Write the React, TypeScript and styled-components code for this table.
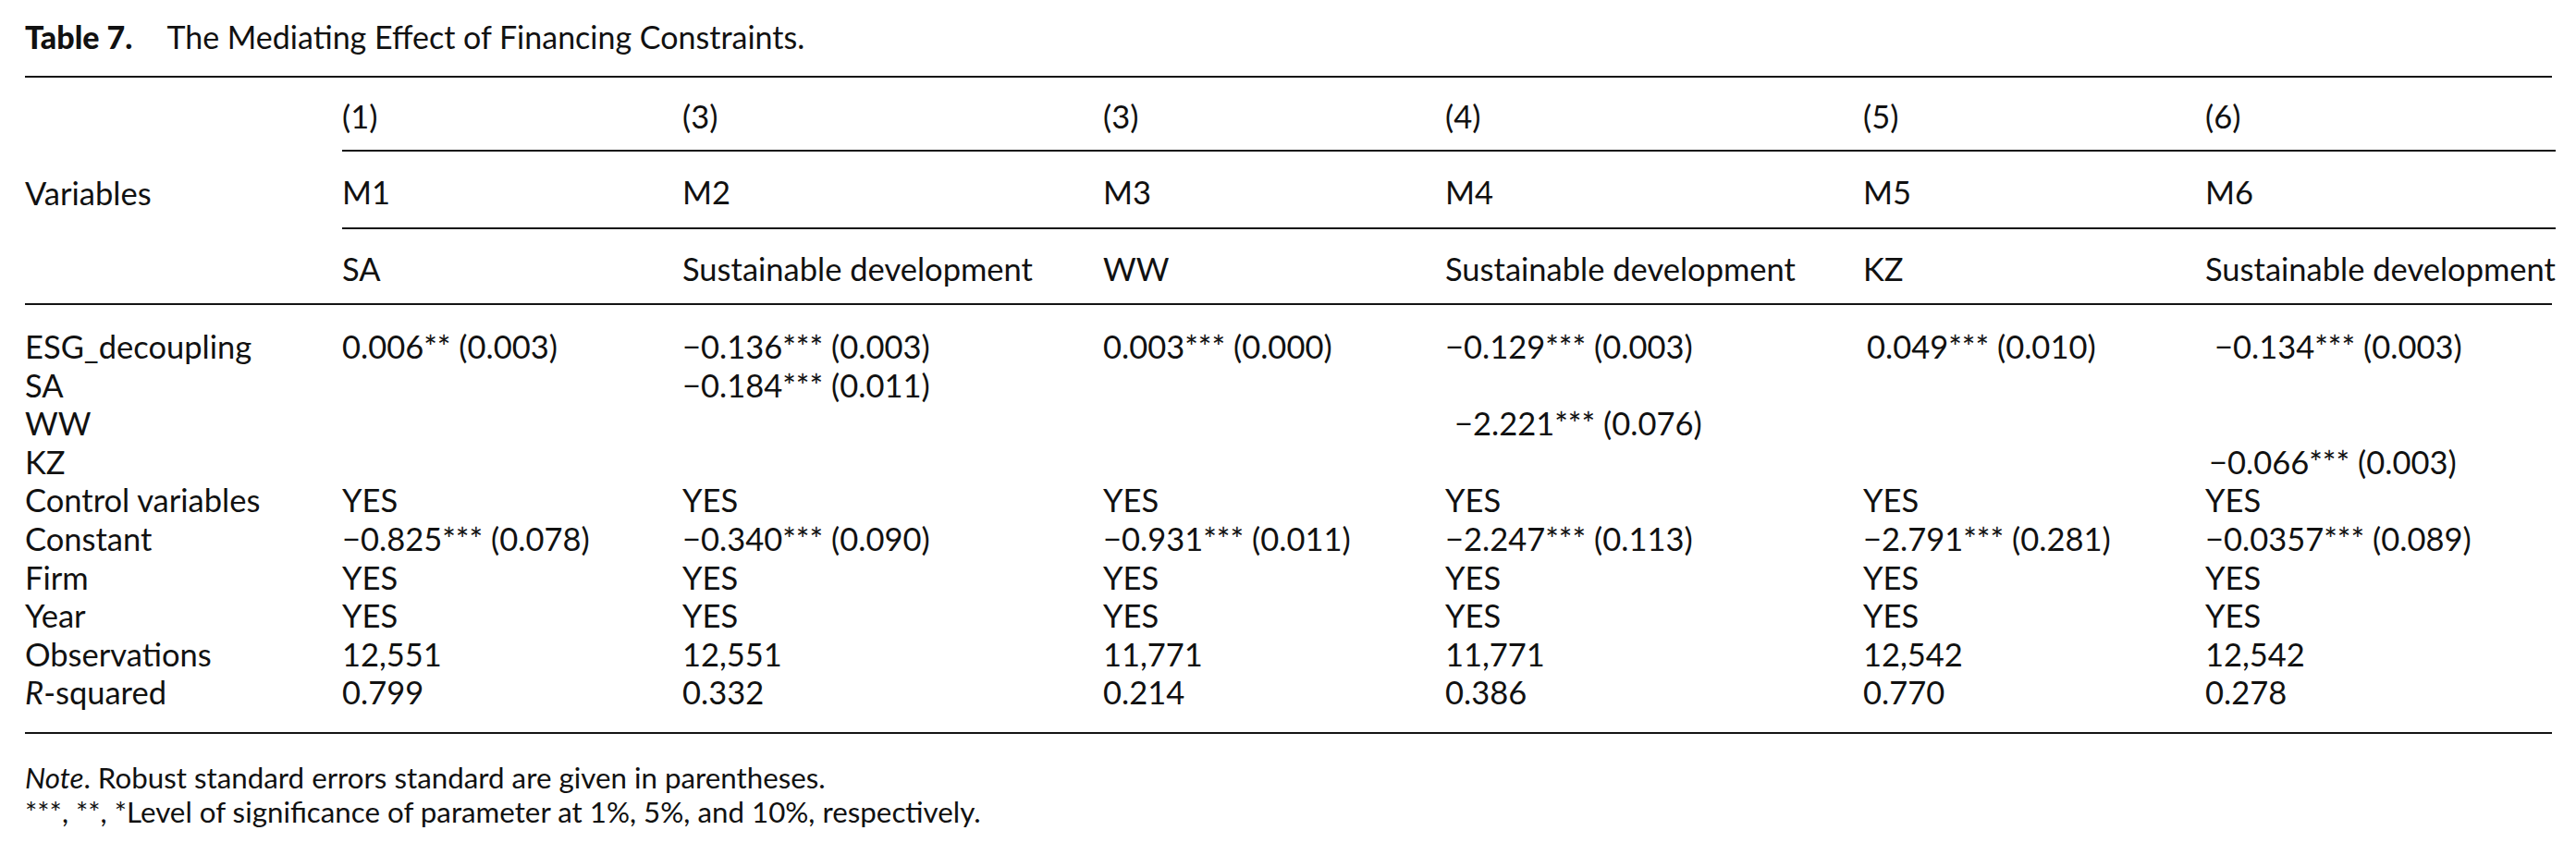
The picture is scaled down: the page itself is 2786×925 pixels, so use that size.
import styled, { createGlobalStyle } from "styled-components";

const COLS = "343px 368px 455px 370px 452px 370px 1fr";
const INK = "#141414";

const GlobalStyle = createGlobalStyle`
  html, body {
    margin: 0;
    padding: 0;
    background: #fff;
  }
  body {
    font-family: "Lato", "Liberation Sans", sans-serif;
    color: #111;
  }
`;

const Page = styled.div`
  width: 2786px;
  height: 925px;
  box-sizing: border-box;
  padding: 20px 26px 0 27px;
  background: #fff;
`;

const Caption = styled.div`
  display: flex;
  gap: 37px;
  font-size: 34px;
  line-height: 40px;
`;

const CaptionLabel = styled.span`
  font-weight: 900;
`;

const Table = styled.div`
  margin-top: 22px;
  border-top: 2px solid ${INK};
  border-bottom: 2px solid ${INK};
  font-size: 34.5px;
`;

const Head = styled.div`
  display: grid;
  grid-template-columns: ${COLS};
  grid-template-rows: 80px 84px 80px;
  border-bottom: 2px solid ${INK};
`;

const VariablesCell = styled.div`
  grid-row: 1 / span 3;
  display: flex;
  align-items: center;
  padding-top: 4px;
`;

const HeadCell = styled.div<{ $ruled?: boolean }>`
  display: flex;
  align-items: center;
  padding-top: 4px;
  white-space: nowrap;
  box-sizing: border-box;
  border-bottom: ${(p) => (p.$ruled ? `2px solid ${INK}` : "none")};
`;

const Body = styled.div`
  display: grid;
  grid-template-columns: ${COLS};
  grid-auto-rows: 41.6px;
  padding: 24px 0 22px;
`;

const Cell = styled.div<{ $indent?: number }>`
  line-height: 41.6px;
  white-space: nowrap;
  padding-left: ${(p) => p.$indent ?? 0}px;
`;

const Notes = styled.div`
  margin-top: 29px;
  font-size: 31.3px;
  line-height: 37px;
`;

const models = [
  { num: "(1)", name: "M1", dep: "SA" },
  { num: "(3)", name: "M2", dep: "Sustainable development" },
  { num: "(3)", name: "M3", dep: "WW" },
  { num: "(4)", name: "M4", dep: "Sustainable development" },
  { num: "(5)", name: "M5", dep: "KZ" },
  { num: "(6)", name: "M6", dep: "Sustainable development" },
];

const yes = ["YES", "YES", "YES", "YES", "YES", "YES"];

type Row = { label: React.ReactNode; values: string[]; indent?: number[] };

const rows: Row[] = [
  {
    label: "ESG_decoupling",
    values: [
      "0.006** (0.003)",
      "−0.136*** (0.003)",
      "0.003*** (0.000)",
      "−0.129*** (0.003)",
      "0.049*** (0.010)",
      "−0.134*** (0.003)",
    ],
    indent: [0, 0, 0, 0, 4, 10],
  },
  { label: "SA", values: ["", "−0.184*** (0.011)", "", "", "", ""] },
  { label: "WW", values: ["", "", "", "−2.221*** (0.076)", "", ""], indent: [0, 0, 0, 10, 0, 0] },
  { label: "KZ", values: ["", "", "", "", "", "−0.066*** (0.003)"], indent: [0, 0, 0, 0, 0, 4] },
  { label: "Control variables", values: yes },
  {
    label: "Constant",
    values: [
      "−0.825*** (0.078)",
      "−0.340*** (0.090)",
      "−0.931*** (0.011)",
      "−2.247*** (0.113)",
      "−2.791*** (0.281)",
      "−0.0357*** (0.089)",
    ],
  },
  { label: "Firm", values: yes },
  { label: "Year", values: yes },
  { label: "Observations", values: ["12,551", "12,551", "11,771", "11,771", "12,542", "12,542"] },
  {
    label: (
      <>
        <i>R</i>-squared
      </>
    ),
    values: ["0.799", "0.332", "0.214", "0.386", "0.770", "0.278"],
  },
];

const App = () => {
  return (
    <Page>
      <GlobalStyle />
      <Caption>
        <CaptionLabel>Table 7.</CaptionLabel>
        <span>The Mediating Effect of Financing Constraints.</span>
      </Caption>
      <Table>
        <Head>
          <VariablesCell>Variables</VariablesCell>
          {models.map((m, i) => (
            <HeadCell key={"n" + i} $ruled style={{ gridRow: 1, gridColumn: i + 2 }}>
              {m.num}
            </HeadCell>
          ))}
          {models.map((m, i) => (
            <HeadCell key={"m" + i} $ruled style={{ gridRow: 2, gridColumn: i + 2 }}>
              {m.name}
            </HeadCell>
          ))}
          {models.map((m, i) => (
            <HeadCell key={"d" + i} style={{ gridRow: 3, gridColumn: i + 2 }}>
              {m.dep}
            </HeadCell>
          ))}
        </Head>
        <Body>
          {rows.map((r, ri) => [
            <Cell key={ri + "-l"}>{r.label}</Cell>,
            ...r.values.map((v, ci) => (
              <Cell key={ri + "-" + ci} $indent={r.indent?.[ci]}>
                {v}
              </Cell>
            )),
          ])}
        </Body>
      </Table>
      <Notes>
        <div>
          <i>Note</i>. Robust standard errors standard are given in parentheses.
        </div>
        <div>***, **, *Level of significance of parameter at 1%, 5%, and 10%, respectively.</div>
      </Notes>
    </Page>
  );
};

export default App;
